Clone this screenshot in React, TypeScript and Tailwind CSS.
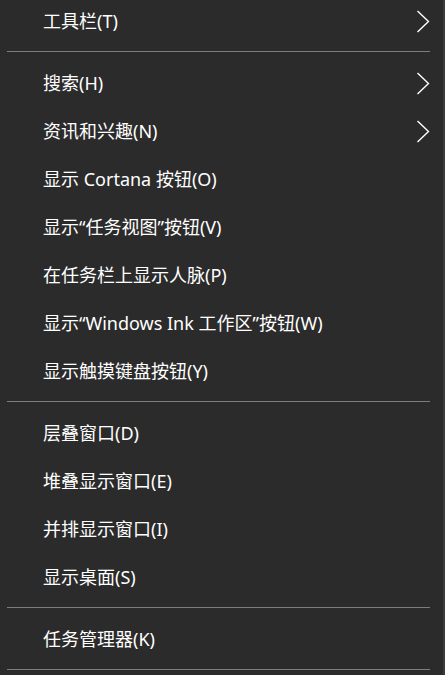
import { Fragment } from 'react';

type Item = { label: string; sub?: boolean } | 'sep';

const items: Item[] = [
  { label: '工具栏(T)', sub: true },
  'sep',
  { label: '搜索(H)', sub: true },
  { label: '资讯和兴趣(N)', sub: true },
  { label: '显示 Cortana 按钮(O)' },
  { label: '显示“任务视图”按钮(V)' },
  { label: '在任务栏上显示人脉(P)' },
  { label: '显示“Windows Ink 工作区”按钮(W)' },
  { label: '显示触摸键盘按钮(Y)' },
  'sep',
  { label: '层叠窗口(D)' },
  { label: '堆叠显示窗口(E)' },
  { label: '并排显示窗口(I)' },
  { label: '显示桌面(S)' },
  'sep',
  { label: '任务管理器(K)' },
  'sep',
];

function Chevron() {
  return (
    <svg width="14" height="23" viewBox="0 0 14 23" className="shrink-0" fill="none">
      <path d="M1.5 1 L12.5 11.5 L1.5 22" stroke="#ffffff" strokeWidth="1.4" />
    </svg>
  );
}

export default function App() {
  return (
    <div
      className="w-[445px] h-[675px] overflow-hidden bg-[#2b2b2b] border-r-2 border-[#3b3b3b]"
      style={{ fontFamily: '"Noto Sans", "Noto Sans CJK SC", sans-serif' }}
    >
      <div className="-mt-[3px]">
        {items.map((it, i) =>
          it === 'sep' ? (
            <div key={i} className="h-[14px] pt-[6px] pl-[7px] pr-[13px]">
              <div className="h-px bg-[#7d7d7d]" />
            </div>
          ) : (
            <Fragment key={i}>
              <div className="h-[48px] flex items-center pl-[43px] pr-[13px] text-[18px] text-white">
                <span className="flex-1 whitespace-nowrap leading-none">{it.label}</span>
                {it.sub && <Chevron />}
              </div>
            </Fragment>
          )
        )}
      </div>
    </div>
  );
}
